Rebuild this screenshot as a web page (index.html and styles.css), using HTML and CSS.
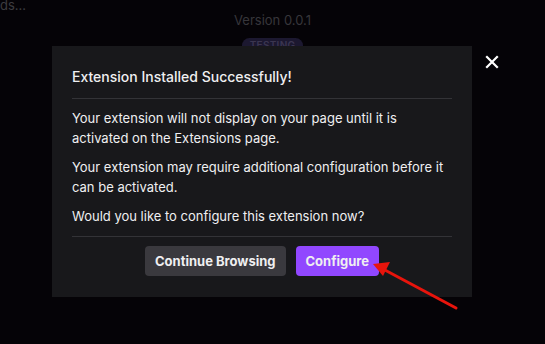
FILE: index.html
```html
<!DOCTYPE html>
<html>
<head>
    <link rel="stylesheet" href="styles.css">
</head>
<body>
    <div class="page">
        <div class="crumb">ds...</div>
        <div class="version">Version 0.0.1</div>
        <div class="pill-row">
            <span class="pill">TESTING</span>
        </div>
    </div>

    <div class="modal">
        <h2 class="modal-title">Extension Installed Successfully!</h2>
        <div class="modal-body">
            <p>Your extension will not display on your page until it is activated on the Extensions page.</p>
            <p>Your extension may require additional configuration before it can be activated.</p>
            <p>Would you like to configure this extension now?</p>
        </div>
        <div class="modal-actions">
            <button class="btn btn-secondary">Continue Browsing</button>
            <button class="btn btn-primary">Configure</button>
        </div>
    </div>

    <button class="close-btn" aria-label="Close">
        <svg width="14" height="14" viewBox="0 0 14 14">
            <path d="M2 2 L12 12 M12 2 L2 12" stroke="#fff" stroke-width="2.2" stroke-linecap="square"/>
        </svg>
    </button>

    <svg class="arrow" width="545" height="344" viewBox="0 0 545 344">
        <line x1="456" y1="308" x2="383" y2="269" stroke="#e8140c" stroke-width="3" stroke-linecap="round"/>
        <polygon points="373,264 390,262 383,276" fill="#e8140c"/>
    </svg>
</body>
</html>
```

FILE: styles.css
```css
html, body {
  margin: 0;
  padding: 0;
}

body {
  width: 545px;
  height: 344px;
  overflow: hidden;
  background: #050307;
  font-family: Inter, "Noto Sans", sans-serif;
  color: #efeff1;
}

.page {
  display: flex;
  flex-direction: column;
  align-items: center;
}

.crumb {
  align-self: flex-start;
  margin-top: -3px;
  font-size: 13px;
  line-height: 16px;
  color: #3c3c40;
}

.version {
  margin-top: -2px;
  font-size: 13px;
  line-height: 18px;
  color: #37363b;
}

.pill-row {
  margin-top: 4px;
}

.pill {
  display: inline-block;
  padding: 0 8px;
  border-radius: 8px;
  background: #1c1830;
  color: #3b3650;
  font-size: 10px;
  font-weight: 600;
  line-height: 15px;
  letter-spacing: 0.3px;
}

/* modal sits above the page */
.modal {
  position: absolute;
  left: 52px;
  top: 46px;
  width: 380px;
  height: 211px;
  padding: 20px;
  background: #18181b;
  display: flex;
  flex-direction: column;
}

.modal-title {
  margin: 0;
  font-size: 14px;
  font-weight: 500;
  line-height: 22px;
  padding-bottom: 10px;
  border-bottom: 1px solid #333337;
}

.modal-body {
  padding: 9px 0 10px;
  border-bottom: 1px solid #333337;
}

.modal-body p {
  margin: 0 0 9px;
  font-size: 13px;
  line-height: 20px;
}

.modal-body p:last-child {
  margin-bottom: 0;
}

.modal-actions {
  display: flex;
  justify-content: center;
  gap: 10px;
  padding-top: 9px;
}

.btn {
  height: 30px;
  padding: 0 10px;
  border: none;
  border-radius: 4px;
  font-family: Inter, "Noto Sans", sans-serif;
  font-size: 13px;
  font-weight: 700;
  color: #efeff1;
}

.btn-secondary {
  background: #3a393e;
}

.btn-primary {
  background: #9147ff;
}

.close-btn {
  position: absolute;
  left: 484px;
  top: 54px;
  width: 16px;
  height: 16px;
  padding: 0;
  border: none;
  background: none;
  display: flex;
  align-items: center;
  justify-content: center;
}

.arrow {
  position: absolute;
  left: 0;
  top: 0;
  pointer-events: none;
}
```
